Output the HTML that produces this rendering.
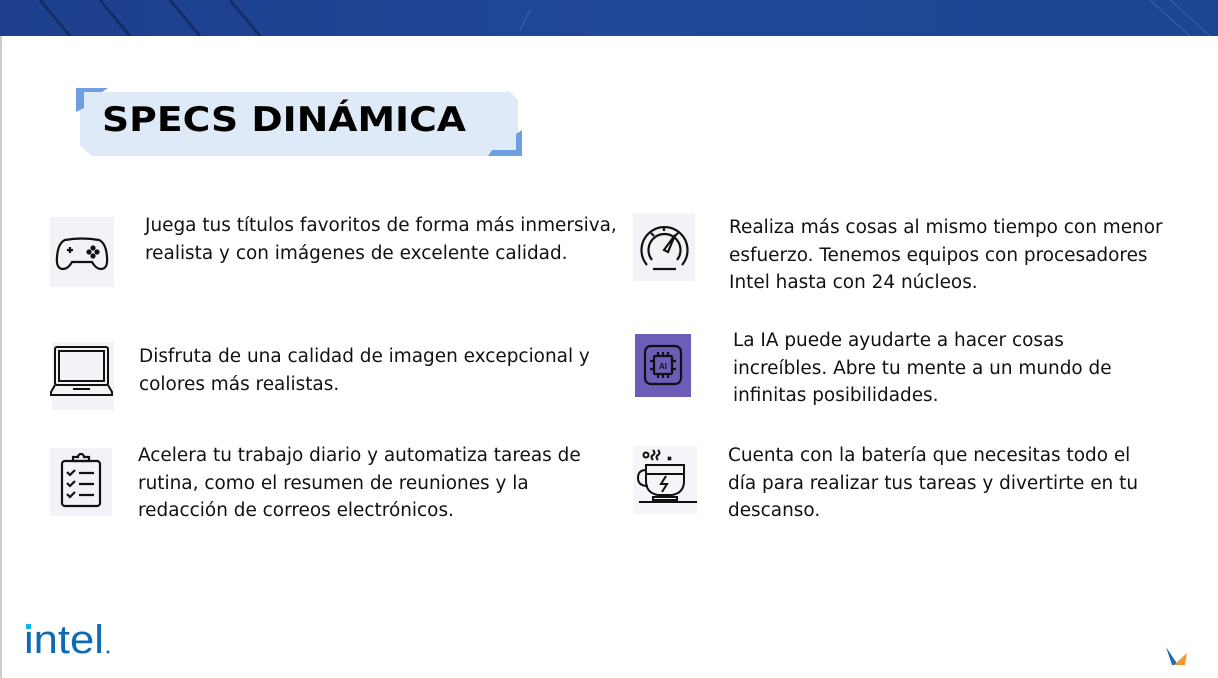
<!DOCTYPE html>
<html><head><meta charset="utf-8"><style>
body{margin:0;width:1218px;height:678px;background:#fff;position:relative;overflow:hidden;font-family:"DejaVu Sans","Liberation Sans",sans-serif;}
.hdr{position:absolute;left:0;top:0;width:1218px;height:36px;background:linear-gradient(90deg,#1d3f8c,#21479a 50%,#1e4592);}
.edge{position:absolute;left:0;top:36px;width:2px;height:642px;background:#ccc;}
.t{position:absolute;font-size:18.45px;line-height:27.7px;color:#111;white-space:nowrap;}
.ic{position:absolute;background:#f3f2f7;}
svg{position:absolute;}
</style></head><body>
<div class="hdr">
<svg width="1218" height="36"><g stroke="#0d2150" stroke-width="3" opacity=".6"><line x1="40" y1="0" x2="70" y2="36"/><line x1="100" y1="0" x2="130" y2="36"/><line x1="230" y1="0" x2="260" y2="36"/><line x1="170" y1="0" x2="200" y2="36"/></g><g stroke="#4a78c8" stroke-width="1" opacity=".6"><line x1="1150" y1="0" x2="1190" y2="36"/><line x1="1170" y1="0" x2="1210" y2="36"/><line x1="530" y1="10" x2="520" y2="30"/></g></svg>
</div>
<div class="edge"></div>
<svg style="left:76px;top:88px" width="450" height="72">
<polygon points="8,4 434,4 442,12 442,62 430,68 16,68 4,58 4,10" fill="#deeaf8"/>
<polygon points="0,0 32,0 26,4 8,4 8,20 0,24" fill="#6f9fe0"/>
<polygon points="446,42 446,68 412,68 416,62 440,62 440,46" fill="#6f9fe0"/>
<text x="26" y="43" font-family="DejaVu Sans, sans-serif" font-weight="bold" font-size="34" textLength="364" lengthAdjust="spacingAndGlyphs" fill="#000">SPECS DINÁMICA</text>
</svg>

<div class="ic" style="left:50px;top:217px;width:64px;height:70px"></div>
<svg style="left:50px;top:217px" width="64" height="70" fill="none" stroke="#111" stroke-width="2.2"><path d="M15,23 Q32,20 49,23 Q56,26 57,40 Q58,52 51,52 Q46,52 42,45 L22,45 Q18,52 13,52 Q6,52 7,40 Q8,26 15,23Z"/><path d="M17,33 h6 M20,30 v6"/><circle cx="43" cy="31" r="1.5" fill="#111"/><circle cx="47" cy="35" r="1.5" fill="#111"/><circle cx="39" cy="35" r="1.5" fill="#111"/><circle cx="43" cy="39" r="1.5" fill="#111"/></svg>
<div class="t" style="left:145px;top:212px">Juega tus títulos favoritos de forma más inmersiva,<br>realista y con imágenes de excelente calidad.</div>

<div class="ic" style="left:52px;top:342px;width:62px;height:68px"></div>
<svg style="left:49px;top:342px" width="66" height="68" fill="none" stroke="#111" stroke-width="2"><rect x="6" y="5" width="53" height="38" rx="2"/><rect x="10" y="9" width="45" height="30"/><path d="M6,43 L2,50 L2,53 L63,53 L63,50 L59,43 M24,47 h17"/></svg>
<div class="t" style="left:139px;top:343px">Disfruta de una calidad de imagen excepcional y<br>colores más realistas.</div>

<div class="ic" style="left:50px;top:448px;width:62px;height:68px"></div>
<svg style="left:50px;top:448px" width="62" height="68" fill="none" stroke="#111" stroke-width="2.2"><rect x="12" y="13" width="38" height="45" rx="3"/><path d="M23,13 v-4 h5 a3,3 0 0 1 6,0 h5 v4 z"/><path d="M17,24 l3,3 5,-5 M17,35 l3,3 5,-5 M17,46 l3,3 5,-5 M29,25 h15 M29,36 h15 M29,47 h15"/></svg>
<div class="t" style="left:138px;top:442px">Acelera tu trabajo diario y automatiza tareas de<br>rutina, como el resumen de reuniones y la<br>redacción de correos electrónicos.</div>

<div class="ic" style="left:633px;top:213px;width:62px;height:68px"></div>
<svg style="left:633px;top:213px" width="62" height="68" fill="none" stroke="#111" stroke-width="2.2"><path d="M14,52 A23,23 0 1 1 49,52"/><path d="M19,47 A16,16 0 1 1 44,47"/><path d="M31,37 L42,22 L35,39 Z" fill="#fff"/><path d="M20,56 h23"/><path d="M31,13 v5 M18,20 l3,3 M45,20 l-3,3"/></svg>
<div class="t" style="left:729px;top:214px">Realiza más cosas al mismo tiempo con menor<br>esfuerzo. Tenemos equipos con procesadores<br>Intel hasta con 24 núcleos.</div>

<div class="ic" style="left:635px;top:334px;width:56px;height:63px;background:#6d5cb8"></div>
<svg style="left:635px;top:334px" width="56" height="63" fill="none" stroke="#111" stroke-width="2.2"><rect x="10" y="12" width="36" height="38" rx="6"/><rect x="19" y="22" width="18" height="18" rx="1"/><path d="M23,22 v-4 M28,22 v-4 M33,22 v-4 M23,40 v4 M28,40 v4 M33,40 v4 M19,27 h-4 M19,35 h-4 M37,27 h4 M37,35 h4"/><text x="28" y="35" font-size="8" font-weight="bold" text-anchor="middle" fill="#111" stroke="none" font-family="Liberation Sans, sans-serif">AI</text></svg>
<div class="t" style="left:733px;top:327px">La IA puede ayudarte a hacer cosas<br>increíbles. Abre tu mente a un mundo de<br>infinitas posibilidades.</div>

<div class="ic" style="left:633px;top:446px;width:64px;height:68px;background:#f5f4f8"></div>
<svg style="left:633px;top:446px" width="66" height="68" fill="none" stroke="#111" stroke-width="2"><circle cx="13" cy="9" r="2.5"/><path d="M20,14 q-3,-3 0,-5 q3,-2 0,-5 M25,14 q-3,-3 0,-5 q3,-2 0,-5 M35,11 l3,3 M38,11 l-3,3"/><path d="M13,19 h38 v16 q0,12 -12,14 h-14 q-12,-2 -12,-14 z M13,28 h38"/><path d="M13,24 q-8,0 -8,8 q0,8 10,8"/><path d="M33,30 l-5,8 h6 l-5,8"/><path d="M20,51 h24 v3 h-24 z M6,56 h58"/></svg>
<div class="t" style="left:728px;top:442px">Cuenta con la batería que necesitas todo el<br>día para realizar tus tareas y divertirte en tu<br>descanso.</div>

<svg style="left:24px;top:618px" width="90" height="42"><text x="0" y="35" font-family="Liberation Sans, sans-serif" font-size="40" fill="#0f6ab4" textLength="80" lengthAdjust="spacingAndGlyphs">intel</text><rect x="2" y="6" width="5" height="5" fill="#11b4ea"/><circle cx="84" cy="34" r="1.5" fill="#0f6ab4"/></svg>
<svg style="left:1163px;top:645px" width="28" height="22"><path d="M3,2 L9,20 L15,20 Z" fill="#1f6cb0"/><path d="M11,20 L22,20 L24,8 Z" fill="#f39a2c"/></svg>
</body></html>
